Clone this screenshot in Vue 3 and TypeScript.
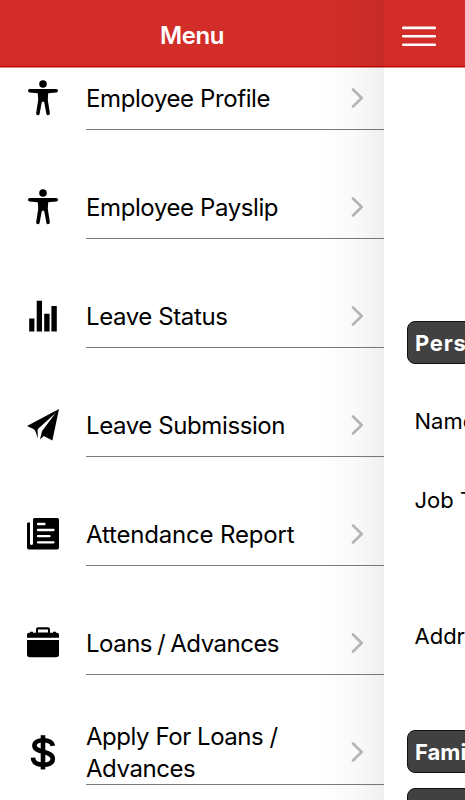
<script setup lang="ts">
type IconName = 'body' | 'stats' | 'send' | 'news' | 'case' | 'dollar'

interface MenuItem {
  label: string
  icon: IconName
}

const items: MenuItem[] = [
  { label: 'Employee Profile', icon: 'body' },
  { label: 'Employee Payslip', icon: 'body' },
  { label: 'Leave Status', icon: 'stats' },
  { label: 'Leave Submission', icon: 'send' },
  { label: 'Attendance Report', icon: 'news' },
  { label: 'Loans / Advances', icon: 'case' },
  { label: 'Apply For Loans / Advances', icon: 'dollar' },
]
</script>

<template>
  <div class="screen">
    <aside class="drawer">
      <header class="bar drawer-bar"><h1>Menu</h1></header>
      <nav class="menu">
        <a v-for="item in items" :key="item.label" class="item" :class="`item-${item.icon}`">
          <svg class="icon" viewBox="0 0 36 36" aria-hidden="true">
            <g v-if="item.icon === 'body'" transform="translate(0 -1)">
              <circle cx="18" cy="4" r="3.8" />
              <path d="M4.7 9H31.3a1.7 1.7 0 0 1 0 3.4L23.2 13.3 22.8 20 24.8 32.8a1.7 1.7 0 0 1-3.4 1.2L19.3 22.5Q18 20.7 16.7 22.5L14.6 34a1.7 1.7 0 0 1-3.4-1.2L13.2 20 12.8 13.3 4.7 12.4a1.7 1.7 0 0 1 0-3.4z" />
            </g>
            <path v-else-if="item.icon === 'stats'" d="M4.2 19.4H9.4V32.4H4.2zM11.7 1.8H17V32.4H11.7zM19.2 14.8H24.6V32.4H19.2zM26.4 6.9H31.8V32.4H26.4z" />
            <g v-else-if="item.icon === 'send'">
              <path d="M34 1 2 17.9 8.5 21Q10.1 21.9 10.6 23.8L12.8 30.6 12.6 22.6Q12.6 21.3 13.4 20.4L30.6 4.9 17.1 23.1 15 31.4 18.8 27.9 27.4 32.6z" />
            </g>
            <g v-else-if="item.icon === 'news'">
              <path d="M3.3 5.6H5V27a1.6 1.6 0 0 0 3 0V2.4Q8 .9 9.5 .9H32.5Q34 .9 34 2.4V30.4Q34 32.6 31.8 32.6H4.6Q2 32.6 2 30V6.9Q2 5.6 3.3 5.6z" />
              <path class="cut" d="M13 7H19.5M13 13H28.5M13 19.2H24.5M13 25.3H28.5" />
            </g>
            <g v-else-if="item.icon === 'case'">
              <path d="M4 6.8H5V5.7H8V6.8H11V3.3Q11 1.3 13 1.3H23Q25 1.3 25 3.3V6.8H28V5.7H31V6.8H32Q34 6.8 34 8.8V11.8H2V8.8Q2 6.8 4 6.8zM13 6.5H23V3.5H13zM2 14H34V28.5Q34 31.3 31.2 31.3H4.8Q2 31.3 2 28.5z" fill-rule="evenodd" />
            </g>
            <g v-else class="dollar">
              <path d="M18 1.2V35.4" />
              <path d="M27.9 11.8C27.3 7.9 23.5 6.2 18.2 6.2C12.8 6.2 9.4 8.2 9.4 11.6C9.4 15.3 13 16.4 18.3 17.8C24.2 19.3 27.8 20.7 27.8 24.8C27.8 28.8 24 30.7 18.2 30.7C12.1 30.7 8.2 28.3 7.9 23.7" />
            </g>
          </svg>
          <span class="content">
            <span class="label">{{ item.label }}</span>
            <svg class="chevron" viewBox="0 0 13 20" aria-hidden="true"><path d="M2 1.5 10.7 10 2 18.5" /></svg>
          </span>
        </a>
      </nav>
    </aside>

    <main class="page">
      <header class="bar page-bar">
        <button class="burger" aria-label="Menu">
          <svg viewBox="0 0 34 22" aria-hidden="true"><path d="M1.2 2.9H32.8M1.2 11.2H32.8M1.2 19.7H32.8" /></svg>
        </button>
      </header>
      <section class="details">
        <h2 class="pill">Personal</h2>
        <p class="name">Name</p>
        <p class="job">Job Title</p>
        <p class="address">Address</p>
        <h2 class="pill family">Family</h2>
        <div class="pill next" />
      </section>
    </main>
  </div>
</template>

<style>
body {
  background: #fff;
  overflow: hidden;
}
</style>

<style scoped>
.screen {
  display: flex;
  width: 465px;
  height: 800px;
  overflow: hidden;
  background: #fff;
  color: #000;
  font-family: Inter, "Liberation Sans", sans-serif;
}
.drawer {
  position: relative;
  flex: 0 0 384px;
  overflow: hidden;
}
/* Shade cast on the drawer by the page lying over it */
.drawer::after {
  content: "";
  position: absolute;
  inset: 0 0 0 auto;
  width: 64px;
  background: linear-gradient(to right, rgba(0, 0, 0, 0), rgba(0, 0, 0, 0.02) 50%, rgba(0, 0, 0, 0.06));
  pointer-events: none;
}
.bar {
  box-sizing: border-box;
  height: 68px;
  background: #d22d29;
  border-bottom: 1px solid #df8b89;
  box-shadow: inset 0 -1px #cb0000;
  display: flex;
  align-items: center;
}
.drawer-bar {
  justify-content: center;
  padding-top: 5px;
}
h1 {
  margin: 0;
  color: #fff;
  font-size: 24px;
  line-height: 30px;
  font-weight: 600;
  letter-spacing: -0.4px;
}
.menu {
  height: 732px;
  overflow: hidden;
}
.item {
  display: flex;
  align-items: flex-end;
  height: 109px;
}
.item:first-child {
  height: 62px;
}
.item:last-child {
  height: 110px;
}
.icon {
  flex: none;
  width: 36px;
  height: 36px;
  margin: 0 25px 13px;
  overflow: visible;
}
.cut {
  fill: none;
  stroke: #fff;
  stroke-width: 2.3;
  stroke-linecap: round;
}
.dollar path {
  fill: none;
  stroke: #000;
  stroke-width: 4.6;
}
.content {
  box-sizing: border-box;
  flex: 1;
  height: 63px;
  border-bottom: 1px solid #7c7c7c;
  display: flex;
  align-items: center;
  justify-content: space-between;
  padding-right: 20px;
}
.label {
  width: 220px;
  padding-top: 2px;
  font-size: 24px;
  line-height: 32px;
  letter-spacing: -0.4px;
}
.item-news .label {
  letter-spacing: -0.18px;
}
.item-case .label {
  letter-spacing: -0.5px;
  word-spacing: -1.2px;
}
.item-dollar .label {
  padding-top: 0;
  letter-spacing: -0.45px;
}
.item-dollar .icon {
  margin-bottom: 15px;
}
.item-dollar .content {
  padding-bottom: 1px;
}
.item-dollar .chevron {
  margin-bottom: 1px;
}
.chevron {
  width: 13px;
  height: 20px;
}
.chevron path {
  fill: none;
  stroke: #b9b9b9;
  stroke-width: 2.6;
  stroke-linecap: round;
  stroke-linejoin: round;
}
.page {
  flex: 1;
  min-width: 0;
  overflow: hidden;
}
.page-bar {
  padding: 5px 0 0 18px;
}
.burger {
  display: flex;
  padding: 0;
  border: 0;
  background: none;
}
.burger svg {
  width: 34px;
  height: 22px;
}
.burger path {
  fill: none;
  stroke: #fff;
  stroke-width: 2.6;
  stroke-linecap: round;
}
.details {
  padding: 253px 0 0 23px;
  width: 200px;
}
.pill {
  box-sizing: border-box;
  height: 43px;
  margin: 0;
  padding-left: 7px;
  border: 1px solid #111;
  border-radius: 8px;
  background: #414141;
  color: #fff;
  font-size: 22px;
  line-height: 42px;
  font-weight: 700;
}
.pill:first-child {
  letter-spacing: 0.8px;
}
p {
  margin: 0;
  padding-left: 7.5px;
  font-size: 22px;
  line-height: 28px;
}
.name { margin-top: 43px; }
.job { margin-top: 51px; }
.address { margin-top: 108px; }
.family { margin-top: 80px; }
.next { margin-top: 15px; }
</style>
